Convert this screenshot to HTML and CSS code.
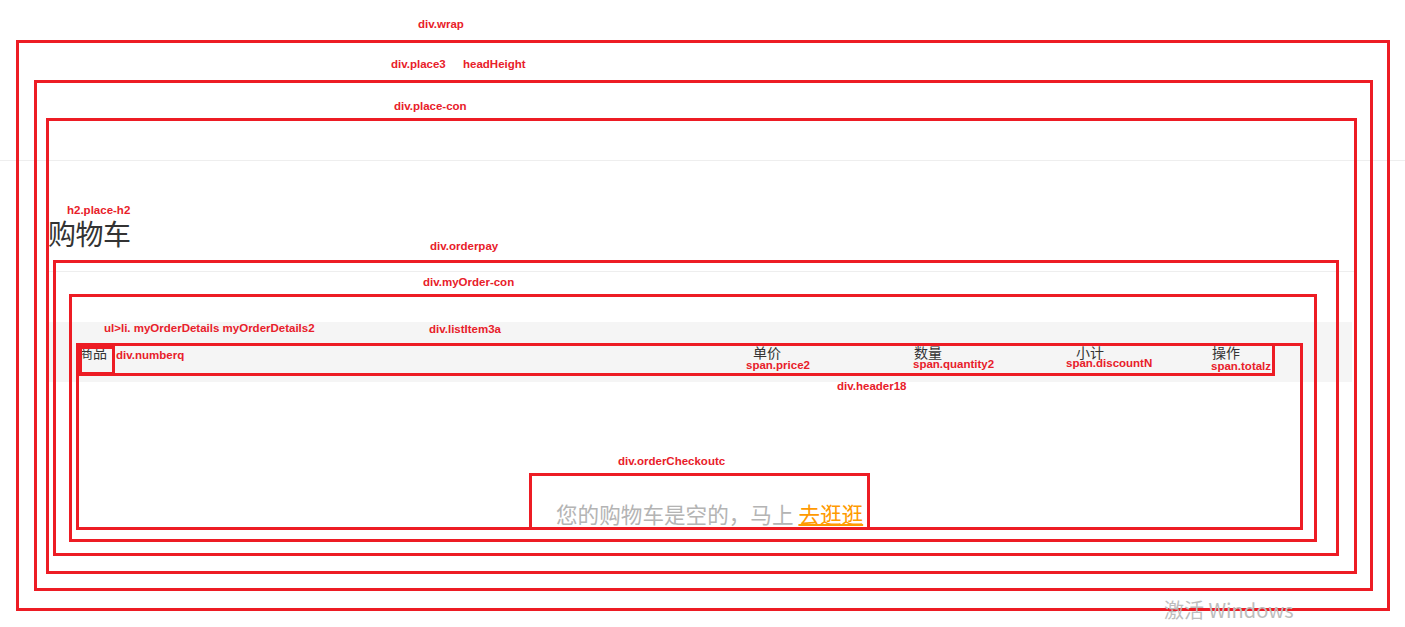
FILE: index.html
```html
<!DOCTYPE html>
<html lang="zh-CN">
<head>
<meta charset="utf-8">
<title>购物车</title>
<link rel="stylesheet" href="styles.css">
</head>
<body>
<div class="wrap">
  <div class="head-height"></div>
  <div class="place-con">
    <h2 class="place-h2">购物车</h2>
    <div class="orderpay">
      <div class="myorder-con">
        <ul class="details">
          <li class="header18">
            <div class="numberq">商品</div>
            <span class="price2">单价</span>
            <span class="quantity2">数量</span>
            <span class="discountN">小计</span>
            <span class="totalz">操作</span>
          </li>
        </ul>
        <div class="orderCheckoutc">您的购物车是空的，马上 <a class="go" href="#">去逛逛</a></div>
      </div>
    </div>
  </div>
</div>

<div class="annot">
  <div class="box b-wrap"></div>
  <div class="box b-place3"></div>
  <div class="box b-placecon"></div>
  <div class="box b-orderpay"></div>
  <div class="box b-myorder"></div>
  <div class="box b-list"></div>
  <div class="box b-header18"></div>
  <div class="box b-numberq"></div>
  <div class="box b-checkout"></div>

  <span class="tag t-wrap">div.wrap</span>
  <span class="tag t-place3">div.place3</span>
  <span class="tag t-head">headHeight</span>
  <span class="tag t-placecon">div.place-con</span>
  <span class="tag t-h2">h2.place-h2</span>
  <span class="tag t-orderpay">div.orderpay</span>
  <span class="tag t-myorder">div.myOrder-con</span>
  <span class="tag t-ul">ul&gt;li. myOrderDetails myOrderDetails2</span>
  <span class="tag t-list">div.listItem3a</span>
  <span class="tag t-numberq">div.numberq</span>
  <span class="tag t-price">span.price2</span>
  <span class="tag t-qty">span.quantity2</span>
  <span class="tag t-disc">span.discountN</span>
  <span class="tag t-total">span.totalz</span>
  <span class="tag t-header18">div.header18</span>
  <span class="tag t-checkout">div.orderCheckoutc</span>
</div>

<div class="watermark">激活 Windows</div>
</body>
</html>
```

FILE: styles.css
```css
html, body {
  margin: 0;
  padding: 0;
  background: #ffffff;
  width: 1405px;
  height: 627px;
  overflow: hidden;
  font-family: "Noto Sans CJK SC", "Noto Sans", sans-serif;
  color: #333333;
}

.wrap {
  width: 1405px;
}

.head-height {
  height: 160px;
  border-bottom: 1px solid #eeeeee;
}

.place-con {
  margin-left: 48px;
  width: 1308px;
}

.place-h2 {
  margin: 53px 0 19px 0;
  font-size: 28px;
  line-height: 38px;
  font-weight: normal;
  color: #333333;
  letter-spacing: -0.5px;
}

.orderpay {
  border-top: 1px solid #eeeeee;
}

.details {
  list-style: none;
  margin: 50px 0 0 0;
  padding: 0;
}

.header18 {
  width: 1304px;
  height: 60px;
  background: #f5f5f5;
  display: grid;
  grid-template-columns: 674px 161px 162px 136px 1fr;
  align-items: center;
  padding-left: 31px;
  box-sizing: border-box;
  font-size: 14px;
  color: #333333;
}

.numberq,
.header18 span {
  line-height: 20px;
}

.orderCheckoutc {
  margin-top: 117px;
  padding-left: 508px;
  font-size: 21.6px;
  line-height: 30px;
  color: #b4b4b4;
}

.go {
  color: #ff9a00;
  text-decoration: underline;
  text-decoration-thickness: 2px;
  text-underline-offset: 1px;
}

/* annotation overlay */
.annot {
  position: absolute;
  left: 0;
  top: 0;
  width: 1405px;
  height: 627px;
  pointer-events: none;
}

.box {
  position: absolute;
  box-sizing: border-box;
  border: 3px solid #ed1c24;
}

.b-wrap { left: 16px; top: 40px; width: 1374px; height: 571px; }
.b-place3 { left: 34px; top: 80px; width: 1339px; height: 511px; }
.b-placecon { left: 46px; top: 118px; width: 1311px; height: 456px; }
.b-orderpay { left: 53px; top: 260px; width: 1286px; height: 296px; }
.b-myorder { left: 69px; top: 294px; width: 1248px; height: 248px; }
.b-list { left: 76px; top: 343px; width: 1227px; height: 187px; }
.b-header18 { left: 76px; top: 343px; width: 1199px; height: 33px; }
.b-numberq { left: 79px; top: 346px; width: 36px; height: 29px; }
.b-checkout { left: 529px; top: 473px; width: 341px; height: 57px; }

.tag {
  position: absolute;
  font-family: "Liberation Sans", Arial, sans-serif;
  font-weight: bold;
  font-size: 11.5px;
  line-height: 13px;
  color: #e8202a;
  white-space: nowrap;
}

.t-wrap { left: 418px; top: 18px; }
.t-place3 { left: 391px; top: 58px; }
.t-head { left: 463px; top: 58px; }
.t-placecon { left: 394px; top: 100px; }
.t-h2 { left: 67px; top: 204px; }
.t-orderpay { left: 430px; top: 240px; }
.t-myorder { left: 423px; top: 276px; }
.t-ul { left: 104px; top: 322px; }
.t-list { left: 429px; top: 323px; }
.t-numberq { left: 116px; top: 349px; }
.t-price { left: 746px; top: 359px; }
.t-qty { left: 913px; top: 358px; }
.t-disc { left: 1066px; top: 357px; }
.t-total { left: 1211px; top: 360px; }
.t-header18 { left: 837px; top: 380px; }
.t-checkout { left: 618px; top: 455px; }

.watermark {
  position: absolute;
  left: 1164px;
  top: 596px;
  font-family: "Noto Sans CJK SC", "Noto Sans", sans-serif;
  font-size: 20px;
  line-height: 28px;
  color: #bdbdbd;
  white-space: nowrap;
}
```
